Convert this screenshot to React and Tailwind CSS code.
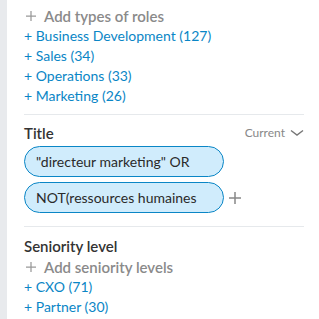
import React from "react";

const Plus = ({ className = "" }) => (
  <svg viewBox="0 0 12 12" className={className} fill="none" stroke="currentColor" strokeWidth="1.5">
    <path d="M6 0v12M0 6h12" />
  </svg>
);

const Link = ({ children }) => (
  <div className="h-5 leading-5 text-[14px] text-[#0a86c6]">+ {children}</div>
);

export default function App() {
  return (
    <div className="flex w-[319px] h-[319px] overflow-hidden bg-white" style={{ fontFamily: "Lato, 'Noto Sans', sans-serif" }}>
      <div className="w-[7px] bg-[#e8eaed] shrink-0" />
      <div className="flex-1 pl-[17px] pr-[15px]">
        <div className="pt-[6px] flex items-center h-[26px] text-[15px] text-[#8a8a8a] font-semibold">
          <Plus className="w-[10px] h-[10px] ml-[2px] mr-[8px] text-[#999]" />
          <span>Add types of roles</span>
        </div>
        <Link>Business Development (127)</Link>
        <Link>Sales (34)</Link>
        <Link>Operations (33)</Link>
        <Link>Marketing (26)</Link>
        <div className="mt-[8px] border-t border-[#e6e9ec]" />
        <div className="mt-[8px] flex items-center justify-between h-5">
          <span className="text-[15px] font-semibold text-[#333]">Title</span>
          <span className="flex items-center text-[12px] text-[#888]">
            Current
            <svg viewBox="0 0 14 8" className="w-[14px] h-[8px] ml-[5px]" fill="none" stroke="#777" strokeWidth="1.4">
              <path d="M1 1.5l6 4.5 6-4.5" />
            </svg>
          </span>
        </div>
        <div className="mt-[3px] flex flex-col gap-[5px]">
          <div className="w-[200px] h-[31px] rounded-full border border-[#0a86c6] bg-[#d0ecfc] flex items-center pl-[11px] text-[14px] text-[#2a2a2a]">
            "directeur marketing" OR
          </div>
          <div className="flex items-center">
            <div className="w-[200px] h-[31px] rounded-full border border-[#0a86c6] bg-[#d0ecfc] flex items-center pl-[11px] text-[14px] text-[#2a2a2a]">
              NOT(ressources humaines
            </div>
            <Plus className="w-[12px] h-[12px] ml-[5px] text-[#888]" />
          </div>
        </div>
        <div className="mt-[13px] border-t border-[#e6e9ec]" />
        <div className="mt-[9px] h-5 leading-5 text-[15px] font-semibold text-[#333]">Seniority level</div>
        <div className="mt-[1px] flex items-center h-5 text-[15px] text-[#8a8a8a] font-semibold">
          <Plus className="w-[10px] h-[10px] ml-[2px] mr-[8px] text-[#999]" />
          <span>Add seniority levels</span>
        </div>
        <Link>CXO (71)</Link>
        <Link>Partner (30)</Link>
      </div>
    </div>
  );
}
